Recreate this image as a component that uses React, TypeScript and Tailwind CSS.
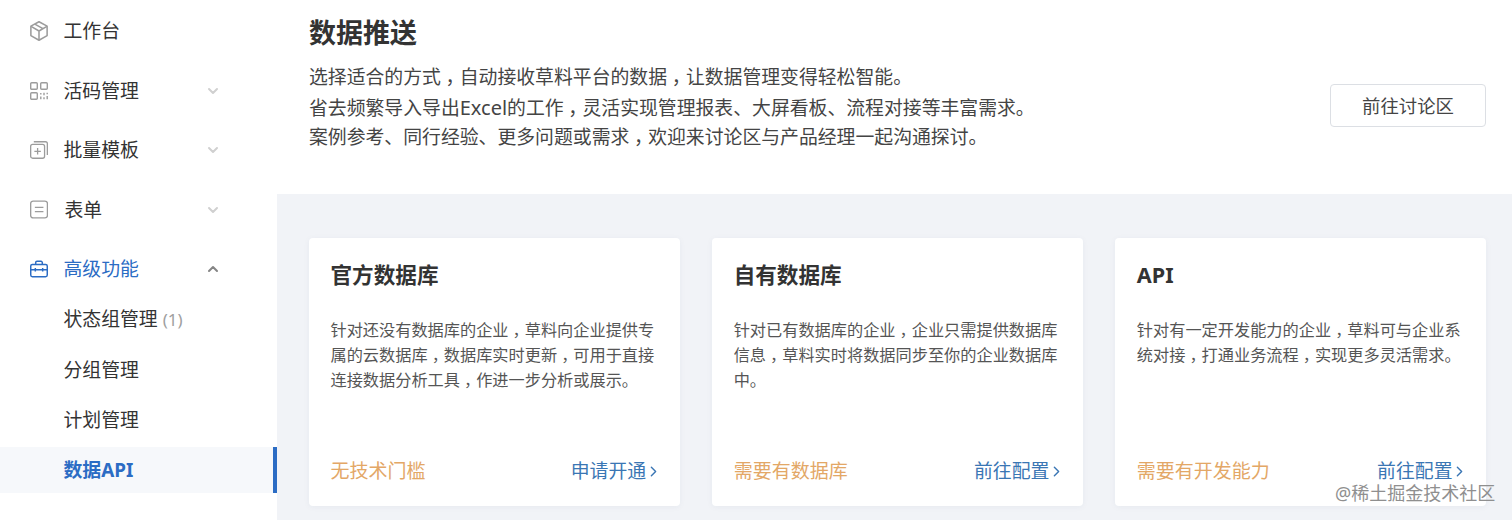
import { ChevronDown, ChevronUp, ChevronRight } from "lucide-react";
import type { ReactNode } from "react";

const CJK = "font-['Noto_Sans','Noto_Sans_CJK_SC',sans-serif]";

// the screenshot's font centres the full-width comma in its cell
function Zh({ text }: { text: string }) {
  const parts = text.split("，");
  return (
    <>
      {parts.map((p, i) => (
        <span key={i}>
          {p}
          {i < parts.length - 1 && <span className="inline-block w-[1em] text-center [font-feature-settings:'halt']">，</span>}
        </span>
      ))}
    </>
  );
}

const CubeIcon = () => (
  <svg width="18" height="20" viewBox="1.8 0.9 16.4 18.2" fill="none" stroke="#9c9c9c" strokeWidth="1.4" strokeLinejoin="round">
    <path d="M10 1.6 17.4 5.6V14.2L10 18.4 2.6 14.2V5.6Z" />
    <path d="M2.8 5.8 10 10 17.2 5.8M10 10V18.2M6.2 3.7 13.6 7.9" />
  </svg>
);

const CodeIcon = () => (
  <svg width="18" height="18" viewBox="1 1 18 18" fill="none" stroke="#9c9c9c" strokeWidth="1.4">
    <rect x="1.7" y="1.7" width="6.6" height="6.6" rx="1" />
    <rect x="11.7" y="1.7" width="6.6" height="6.6" rx="1" />
    <rect x="1.7" y="11.7" width="6.6" height="6.6" rx="1" />
    <path d="M11.8 12v1.4M11.8 15.5v2.8M15 11.8v2.4M15 16.2v2.1M18.2 11.8v1.5M18.2 15v3.3" />
  </svg>
);

const TemplateIcon = () => (
  <svg width="18" height="18" viewBox="0.3 0.5 19.4 19.2" fill="none" stroke="#9c9c9c" strokeWidth="1.4">
    <rect x="1" y="4" width="15" height="15" rx="2.2" />
    <path d="M4.4 1.2H17a2 2 0 0 1 2 2V15.6M8.5 8v7M5 11.5h7" />
  </svg>
);

const FormIcon = () => (
  <svg width="18" height="19" viewBox="0.3 0.5 18.9 19" fill="none" stroke="#9c9c9c" strokeWidth="1.4">
    <rect x="1" y="1.2" width="17.6" height="17.6" rx="2.6" />
    <path d="M5.4 7.8h9M5.4 12.2h9" />
  </svg>
);

const CaseIcon = () => (
  <svg width="18" height="18" viewBox="0.2 0.8 19.6 18.4" fill="none" stroke="#2b6cc4" strokeWidth="1.6">
    <rect x="1" y="5" width="18" height="13.4" rx="1.8" />
    <path d="M6.4 5V3a1.4 1.4 0 0 1 1.4-1.4h4.4A1.4 1.4 0 0 1 13.6 3v2M1 10.8h18M6 8.8v3.8M14 8.8v3.8" />
  </svg>
);

function MenuRow({ icon, label, open, active, indent }: { icon: ReactNode; label: string; open?: boolean; active?: boolean; indent?: boolean }) {
  return (
    <div className="h-[59.5px] flex items-center pl-[30px]">
      <span className="w-[20px] flex justify-start">{icon}</span>
      <span className={`ml-[13.5px] text-[18.85px] ${indent ? "pl-[1px]" : ""} ${active ? "text-[#2b6cc4]" : "text-[#333333]"}`}>{label}</span>
      <span className="ml-auto mr-[56px]">
        {open === undefined ? null : open ? (
          <ChevronUp size={16} strokeWidth={3} className="text-[#858585]" />
        ) : (
          <ChevronDown size={16} strokeWidth={3} className="text-[#d0d0d0]" />
        )}
      </span>
    </div>
  );
}

function SubRow({ label, count }: { label: string; count?: string }) {
  return (
    <div className="h-[50.5px] flex items-center pl-[63.5px] text-[18.85px] text-[#333333]">
      {label}
      {count && <span className="ml-[5px] text-[17px] text-[#a0a0a0]">{count}</span>}
    </div>
  );
}

function Card({ title, lines, tag, link }: { title: string; lines: string[]; tag: string; link: string }) {
  return (
    <div className="h-[268px] bg-white rounded-[4px] shadow-[0_1px_6px_rgba(30,50,90,0.05)] px-[21.5px] flex flex-col">
      <div className="mt-[22px] text-[21.6px] leading-[30px] font-bold text-[#333333]">{title}</div>
      <div className="mt-[28px] text-[16.2px] leading-[25px] text-[#555555] whitespace-nowrap">
        {lines.map((l) => (
          <div key={l}>
            <Zh text={l} />
          </div>
        ))}
      </div>
      <div className="mt-auto mb-[25px] flex items-center justify-between text-[18.85px] leading-[20px]">
        <span className="text-[#e3a766] text-[19px]">{tag}</span>
        <span className="flex items-center text-[#3a76b4]">
          {link}
          <ChevronRight size={17} strokeWidth={2} className="ml-[-1px] mr-[-4px]" />
        </span>
      </div>
    </div>
  );
}

export default function App() {
  return (
    <div className={`w-[1512px] h-[520px] overflow-hidden flex bg-white ${CJK}`}>
      {/* Sidebar */}
      <aside className="w-[277px] shrink-0 bg-white pt-[1.5px]">
        <MenuRow icon={<CubeIcon />} label="工作台" />
        <MenuRow icon={<CodeIcon />} label="活码管理" open={false} />
        <MenuRow icon={<TemplateIcon />} label="批量模板" open={false} />
        <MenuRow icon={<FormIcon />} label="表单" open={false} indent />
        <MenuRow icon={<CaseIcon />} label="高级功能" open active />
        <div className="mt-[-5px]">
          <SubRow label="状态组管理" count="(1)" />
          <SubRow label="分组管理" />
          <SubRow label="计划管理" />
          <div className="mt-[1.5px] h-[46px] flex items-center pl-[63.5px] bg-[#f6f8fb] border-r-[4px] border-[#2b6cc4] text-[18.85px] font-bold text-[#2b6cc4]">
            数据API
          </div>
        </div>
      </aside>

      {/* Main */}
      <main className="flex-1 bg-[#f1f3f7] relative">
        <header className="h-[194px] bg-white pl-[32px] pr-[26px] flex">
          <div className="flex-1">
            <h1 className="mt-[14px] text-[27px] leading-[38px] font-bold text-[#333333]">数据推送</h1>
            <div className="mt-[11px] text-[18.85px] leading-[29.5px] text-[#444444]">
              <p><Zh text="选择适合的方式，自动接收草料平台的数据，让数据管理变得轻松智能。" /></p>
              <p>
                省去频繁导入导出<span className="text-[20px]">Excel</span>
                <Zh text="的工作，灵活实现管理报表、大屏看板、流程对接等丰富需求。" />
              </p>
              <p><Zh text="案例参考、同行经验、更多问题或需求，欢迎来讨论区与产品经理一起沟通探讨。" /></p>
            </div>
          </div>
          <button className="mt-[84px] w-[156px] h-[43px] bg-white border border-[#dcdfe4] rounded-[4px] text-[18.4px] text-[#444444]">
            前往讨论区
          </button>
        </header>
        <div className="pt-[44px] pl-[32px] pr-[26px] grid grid-cols-3 gap-[32.5px]">
          <Card
            title="官方数据库"
            lines={["针对还没有数据库的企业，草料向企业提供专", "属的云数据库，数据库实时更新，可用于直接", "连接数据分析工具，作进一步分析或展示。"]}
            tag="无技术门槛"
            link="申请开通"
          />
          <Card
            title="自有数据库"
            lines={["针对已有数据库的企业，企业只需提供数据库", "信息，草料实时将数据同步至你的企业数据库", "中。"]}
            tag="需要有数据库"
            link="前往配置"
          />
          <Card
            title="API"
            lines={["针对有一定开发能力的企业，草料可与企业系", "统对接，打通业务流程，实现更多灵活需求。"]}
            tag="需要有开发能力"
            link="前往配置"
          />
        </div>
        {/* watermark */}
        <div className="absolute left-[1058px] top-[484px] text-[18px] leading-[18px] whitespace-nowrap text-[#8f8f8f]">
          @稀土掘金技术社区
        </div>
      </main>
    </div>
  );
}
